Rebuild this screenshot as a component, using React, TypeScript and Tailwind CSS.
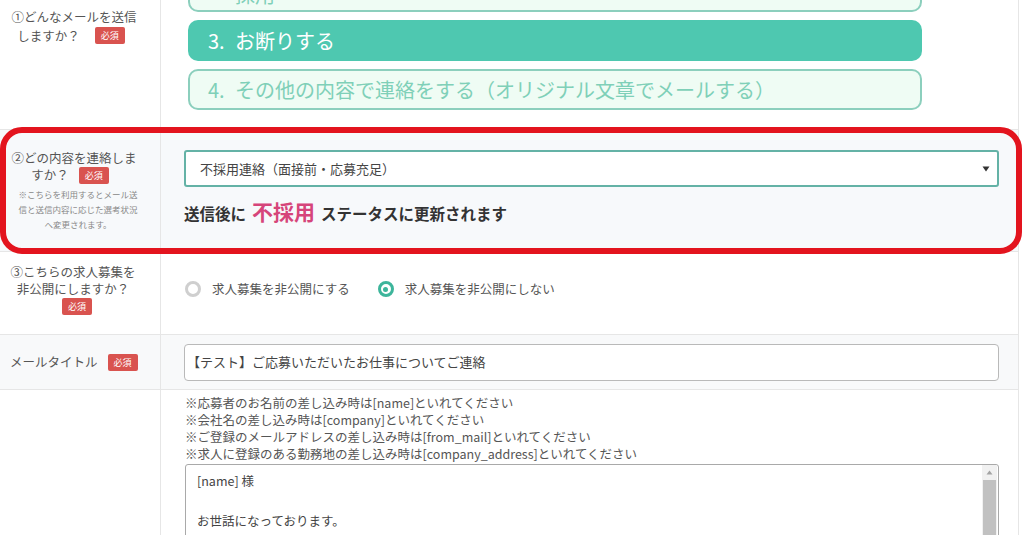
import React from 'react';

const font = { fontFamily: '"Noto Sans CJK JP", "Noto Sans", sans-serif' };

function Badge() {
  return (
    <span className="inline-flex items-center justify-center w-[30px] h-[17px] bg-[#d9534f] text-white text-[9px] leading-none rounded-[2px] align-middle">
      必須
    </span>
  );
}

function Radio({ checked, label }: { checked?: boolean; label: string }) {
  return (
    <label className="flex items-center gap-[11px]">
      <span
        className={`w-[16px] h-[16px] rounded-full border-[3px] flex items-center justify-center bg-white ${
          checked ? 'border-[#3db59b]' : 'border-[#cfcfcf]'
        }`}
      >
        {checked && <span className="w-[5px] h-[5px] rounded-full bg-[#3db59b]" />}
      </span>
      <span className="text-[12.5px] text-[#555]">{label}</span>
    </label>
  );
}

function Choice({ no, text, active }: { no: string; text: string; active?: boolean }) {
  return (
    <div
      className={`h-[41px] rounded-[10px] text-[20px] flex items-center ${
        active
          ? 'bg-[#4ec8b0] text-white pl-[20px]'
          : 'border-2 border-[#8ccfbd] bg-[#effcf4] text-[#7fd0b8] pl-[18px]'
      }`}
    >
      <span className="inline-block w-[27px]">{no}</span>
      <span>{text}</span>
    </div>
  );
}

export default function App() {
  return (
    <div className="w-[1024px] h-[535px] overflow-hidden bg-white text-[#555]" style={font}>
      <div className="relative w-[1019px] border-r border-[#e6e6e6]">
        {/* ① メール種別 */}
        <div className="flex h-[129px]">
          <div className="w-[161px] shrink-0 border-r border-[#e6e6e6] pt-[7px] pr-[12px] text-center text-[12.5px] leading-[19px]">
            <div>①どんなメールを送信</div>
            <div className="flex items-center justify-center gap-[15px] pr-[6px]">
              <span>しますか？</span>
              <Badge />
            </div>
          </div>
          <div className="flex-1 pl-[27px] pr-[96px] -mt-[30px] flex flex-col gap-[8px]">
            <div className="h-[42px] rounded-[10px] border-2 border-[#8ccfbd] bg-[#effcf4] text-[#7fd0b8] text-[20px] leading-[28px] flex items-start pt-[9px] pl-[45px] overflow-hidden">
              採用
            </div>
            <Choice no="3." text="お断りする" active />
            <Choice no="4." text="その他の内容で連絡をする（オリジナル文章でメールする）" />
          </div>
        </div>

        {/* ② 連絡内容 */}
        <div className="relative flex h-[122px] bg-[#f7f9fb] border-t border-[#e6e6e6]">
          <div className="w-[161px] shrink-0 border-r border-[#e6e6e6] pt-[19px] pr-[12px] text-center">
            <div className="text-[12.5px] leading-[17px]">②どの内容を連絡しま</div>
            <div className="flex items-center justify-center gap-[10px] text-[12.5px] leading-[18px] pr-[8px]">
              <span>すか？</span>
              <Badge />
            </div>
            <div className="text-[8.5px] leading-[15px] text-[#888] mt-[3px] pl-[8px]">
              <div>※こちらを利用するとメール送</div>
              <div>信と送信内容に応じた選考状況</div>
              <div>へ変更されます。</div>
            </div>
          </div>
          <div className="flex-1 pl-[23px] pr-[19px] pt-[20px]">
            <div className="h-[37px] rounded-[3px] border-2 border-[#64b2a6] bg-white flex items-center justify-between pl-[14px] pr-[7px]">
              <span className="text-[13px] text-[#444]">不採用連絡（面接前・応募充足）</span>
              <svg width="8" height="6" viewBox="0 0 8 6">
                <path d="M0.5 0.5 L7.5 0.5 L4 5.5 Z" fill="#333" />
              </svg>
            </div>
            <div className="mt-[9px] flex items-baseline font-bold text-[#333]">
              <span className="text-[15.5px]">送信後に</span>
              <span className="text-[21px] text-[#d6457a] mx-[6px]">不採用</span>
              <span className="text-[15.5px]">ステータスに更新されます</span>
            </div>
          </div>
          <div className="absolute -top-[3px] -bottom-[3px] left-0 -right-[4px] border-[6px] border-[#e3141e] rounded-[22px] pointer-events-none" />
        </div>

        {/* ③ 非公開 */}
        <div className="flex h-[83px] border-t border-[#e6e6e6]">
          <div className="w-[161px] shrink-0 border-r border-[#e6e6e6] pt-[11px] pr-[14px] text-center text-[12.5px] leading-[17px]">
            <div>③こちらの求人募集を</div>
            <div>非公開にしますか？</div>
            <div className="-mt-[1px] pl-[8px]">
              <Badge />
            </div>
          </div>
          <div className="flex-1 pl-[24px] flex items-center gap-[28px] pb-[8px]">
            <Radio label="求人募集を非公開にする" />
            <Radio checked label="求人募集を非公開にしない" />
          </div>
        </div>

        {/* メールタイトル */}
        <div className="flex h-[55px] bg-[#f8f9fa] border-t border-[#e6e6e6]">
          <div className="w-[161px] shrink-0 border-r border-[#e6e6e6] flex items-center gap-[10px] pl-[10px] text-[12.5px]">
            <span>メールタイトル</span>
            <Badge />
          </div>
          <div className="flex-1 pl-[23px] pr-[19px] flex items-center">
            <div className="w-full h-[37px] rounded-[4px] border border-[#b9b9b9] bg-white flex items-center pl-[2px] text-[13px] text-[#444]">
              【テスト】ご応募いただいたお仕事についてご連絡
            </div>
          </div>
        </div>

        {/* 本文 */}
        <div className="flex h-[200px] border-t border-[#e6e6e6]">
          <div className="w-[161px] shrink-0 border-r border-[#e6e6e6]" />
          <div className="flex-1 pl-[24px] pr-[19px] pt-[4px]">
            <div className="text-[12.5px] leading-[17px] text-[#555]">
              <div>※応募者のお名前の差し込み時は[name]といれてください</div>
              <div>※会社名の差し込み時は[company]といれてください</div>
              <div>※ご登録のメールアドレスの差し込み時は[from_mail]といれてください</div>
              <div>※求人に登録のある勤務地の差し込み時は[company_address]といれてください</div>
            </div>
            <div className="mt-[2px] h-[140px] rounded-[3px] border border-[#a9a9a9] bg-white flex">
              <div className="flex-1 pl-[11px] pt-[6px] text-[12.5px] leading-[20px] text-[#444]">
                <div>[name] 様</div>
                <div>&nbsp;</div>
                <div>お世話になっております。</div>
                <div>株式会社テストです。</div>
              </div>
              <div className="w-[15px] flex flex-col bg-[#f1f1f1] mr-[1px]">
                <div className="h-[15px] flex items-center justify-center">
                  <svg width="7" height="5" viewBox="0 0 7 5">
                    <path d="M0.5 4.5 L3.5 0.5 L6.5 4.5 Z" fill="#a3a3a3" />
                  </svg>
                </div>
                <div className="flex-1 mx-[1px] bg-[#c1c1c1]" />
              </div>
            </div>
          </div>
        </div>
      </div>
    </div>
  );
}
